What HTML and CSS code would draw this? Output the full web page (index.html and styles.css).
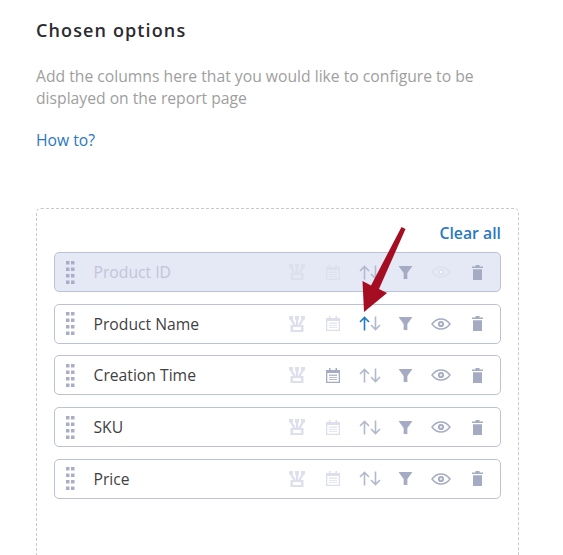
FILE: index.html
```html
<!DOCTYPE html>
<html lang="en">
<head>
<meta charset="utf-8">
<title>Chosen options</title>
<link rel="stylesheet" href="styles.css">
</head>
<body>
<svg class="defs" width="0" height="0" aria-hidden="true">
  <defs>
    <symbol id="i-group" viewBox="0 0 16 16">
      <path d="M0 0h4v3.500H0zM6 0h4v3.500H6zM12 0h4v3.500h-4z"/>
      <path d="M2 3 5.500 9M14 3l-3.500 6M8 3v6" fill="none" stroke="currentColor" stroke-width="2.400"/>
      <path fill-rule="evenodd" d="M1.500 9h13v7h-13zM4 11v3h8v-3z"/>
    </symbol>
    <symbol id="i-cal" viewBox="0 0 14 15">
      <path fill-rule="evenodd" d="M0 2h3V0h1.500v2h5V0H11v2h3v13H0zM1.300 5v8.700h11.400V5z"/>
      <path d="M3 6.500h8V8H3zM3 9h8v.900H3zM3 11h8v.900H3z" opacity=".8"/>
    </symbol>
    <symbol id="i-up" viewBox="0 0 11 15">
      <path d="M5.500 14.500V1.500M1 6l4.500-4.500L10 6" fill="none" stroke="currentColor" stroke-width="1.600"/>
    </symbol>
    <symbol id="i-down" viewBox="0 0 11 15">
      <path d="M5.500 .5v13M1 9l4.500 4.500L10 9" fill="none" stroke="currentColor" stroke-width="1.600"/>
    </symbol>
    <symbol id="i-filter" viewBox="0 0 15 14">
      <path d="M0 0h15L9.500 7.500V14H5.500V7.500z"/>
    </symbol>
    <symbol id="i-eye" viewBox="0 0 20 12">
      <path d="M1 6c2.500-3.300 5.500-5 9-5s6.500 1.700 9 5c-2.500 3.300-5.500 5-9 5S3.500 9.300 1 6z" fill="none" stroke="currentColor" stroke-width="1.400"/>
      <circle cx="10" cy="6" r="3.100"/>
      <circle cx="10" cy="6" r="1.300" fill="#fff" fill-opacity=".75"/>
    </symbol>
    <symbol id="i-trash" viewBox="0 0 11 15">
      <path d="M3.500 0h4v1.500H11V3H0V1.500h3.500zM1 4.200h9V15H1z"/>
    </symbol>
    <symbol id="i-grip" viewBox="0 0 9 23">
      <path d="M0 0h3.500v3.500H0zM5 0h3.500v3.500H5zM0 6.500h3.500V10H0zM5 6.500h3.500V10H5zM0 13h3.500v3.500H0zM5 13h3.500v3.500H5zM0 19.500h3.500V23H0zM5 19.500h3.500V23H5z"/>
    </symbol>
  </defs>
</svg>

<main class="page">
  <h1 class="title">Chosen options</h1>
  <p class="lead">Add the columns here that you would like to configure to be displayed on the report page</p>
  <a class="how" href="#">How to?</a>

  <section class="zone">
    <div class="zone-head"><a class="clear" href="#">Clear all</a></div>
    <ul class="rows">
      <li class="row row-fixed">
        <svg class="grip"><use href="#i-grip"/></svg>
        <span class="name">Product ID</span>
        <span class="tools">
          <span class="tool faint"><svg class="ic-group"><use href="#i-group"/></svg></span>
          <span class="tool faint"><svg class="ic-cal"><use href="#i-cal"/></svg></span>
          <span class="tool"><span class="sort"><svg class="ic-arrow"><use href="#i-up"/></svg><svg class="ic-arrow"><use href="#i-down"/></svg></span></span>
          <span class="tool"><svg class="ic-filter"><use href="#i-filter"/></svg></span>
          <span class="tool faint"><svg class="ic-eye"><use href="#i-eye"/></svg></span>
          <span class="tool"><svg class="ic-trash"><use href="#i-trash"/></svg></span>
        </span>
      </li>
      <li class="row">
        <svg class="grip"><use href="#i-grip"/></svg>
        <span class="name">Product Name</span>
        <span class="tools">
          <span class="tool faint"><svg class="ic-group"><use href="#i-group"/></svg></span>
          <span class="tool faint"><svg class="ic-cal"><use href="#i-cal"/></svg></span>
          <span class="tool"><span class="sort"><svg class="ic-arrow active"><use href="#i-up"/></svg><svg class="ic-arrow"><use href="#i-down"/></svg></span></span>
          <span class="tool"><svg class="ic-filter"><use href="#i-filter"/></svg></span>
          <span class="tool"><svg class="ic-eye"><use href="#i-eye"/></svg></span>
          <span class="tool"><svg class="ic-trash"><use href="#i-trash"/></svg></span>
        </span>
      </li>
      <li class="row">
        <svg class="grip"><use href="#i-grip"/></svg>
        <span class="name">Creation Time</span>
        <span class="tools">
          <span class="tool faint"><svg class="ic-group"><use href="#i-group"/></svg></span>
          <span class="tool"><svg class="ic-cal"><use href="#i-cal"/></svg></span>
          <span class="tool"><span class="sort"><svg class="ic-arrow"><use href="#i-up"/></svg><svg class="ic-arrow"><use href="#i-down"/></svg></span></span>
          <span class="tool"><svg class="ic-filter"><use href="#i-filter"/></svg></span>
          <span class="tool"><svg class="ic-eye"><use href="#i-eye"/></svg></span>
          <span class="tool"><svg class="ic-trash"><use href="#i-trash"/></svg></span>
        </span>
      </li>
      <li class="row">
        <svg class="grip"><use href="#i-grip"/></svg>
        <span class="name">SKU</span>
        <span class="tools">
          <span class="tool faint"><svg class="ic-group"><use href="#i-group"/></svg></span>
          <span class="tool faint"><svg class="ic-cal"><use href="#i-cal"/></svg></span>
          <span class="tool"><span class="sort"><svg class="ic-arrow"><use href="#i-up"/></svg><svg class="ic-arrow"><use href="#i-down"/></svg></span></span>
          <span class="tool"><svg class="ic-filter"><use href="#i-filter"/></svg></span>
          <span class="tool"><svg class="ic-eye"><use href="#i-eye"/></svg></span>
          <span class="tool"><svg class="ic-trash"><use href="#i-trash"/></svg></span>
        </span>
      </li>
      <li class="row">
        <svg class="grip"><use href="#i-grip"/></svg>
        <span class="name">Price</span>
        <span class="tools">
          <span class="tool faint"><svg class="ic-group"><use href="#i-group"/></svg></span>
          <span class="tool faint"><svg class="ic-cal"><use href="#i-cal"/></svg></span>
          <span class="tool"><span class="sort"><svg class="ic-arrow"><use href="#i-up"/></svg><svg class="ic-arrow"><use href="#i-down"/></svg></span></span>
          <span class="tool"><svg class="ic-filter"><use href="#i-filter"/></svg></span>
          <span class="tool"><svg class="ic-eye"><use href="#i-eye"/></svg></span>
          <span class="tool"><svg class="ic-trash"><use href="#i-trash"/></svg></span>
        </span>
      </li>
    </ul>
    <svg class="callout" viewBox="0 0 46 90" aria-hidden="true">
      <path d="M40.500 1 44.500 3 18 63 26 67 3 86 1.500 55 10 59.500z"/>
    </svg>
  </section>
</main>
</body>
</html>
```

FILE: styles.css
```css
html, body {
  margin: 0;
  padding: 0;
  height: 100%;
  background: #fff;
  overflow: hidden;
}

body {
  font-family: "Open Sans", "Liberation Sans", sans-serif;
}

.defs {
  position: absolute;
}

.page {
  height: 100%;
  box-sizing: border-box;
  overflow: hidden;
  padding: 18px 44px 0 36px;
}

.title {
  margin: 0;
  font-size: 18px;
  line-height: 25px;
  font-weight: 600;
  letter-spacing: 1.120px;
  color: #2b2b30;
}

.lead {
  margin: 22px 0 0;
  font-size: 15.700px;
  line-height: 22px;
  color: #9e9e9e;
}

.how {
  display: block;
  margin-top: 20px;
  font-size: 15.700px;
  line-height: 22px;
  color: #2a78c2;
  text-decoration: none;
}

.zone {
  position: relative;
  margin-top: 57px;
  height: 400px;
  padding: 0 17px;
  border: 1px dashed #c6c9ce;
  border-radius: 5px;
}

.zone-head {
  display: flex;
  justify-content: flex-end;
  height: 43px;
  padding-top: 13px;
  box-sizing: border-box;
}

.clear {
  font-size: 15.800px;
  line-height: 22px;
  font-weight: 600;
  color: #2a78c2;
  text-decoration: none;
}

.rows {
  list-style: none;
  margin: 0;
  padding: 0;
  display: flex;
  flex-direction: column;
  gap: 11.700px;
}

.row {
  display: flex;
  align-items: center;
  height: 40px;
  box-sizing: border-box;
  padding: 0 5px 0 11px;
  border: 1px solid #bcc1d3;
  border-radius: 5px;
  background: #fff;
  color: #3f3f43;
}

.row-fixed {
  background: #e5e8f5;
}

.row-fixed .name {
  color: #c2c5d8;
}

.grip {
  width: 9px;
  height: 23px;
  flex: none;
  fill: #a9aec6;
  color: #a9aec6;
}

.name {
  margin-left: 18.500px;
  font-size: 15.700px;
  line-height: 22px;
}

.tools {
  display: flex;
  align-items: center;
  margin-left: auto;
  color: #a5abc2;
}

.tool {
  display: flex;
  align-items: center;
  justify-content: center;
  width: 36px;
  height: 20px;
}

.tool svg {
  display: block;
  fill: currentColor;
  filter: blur(0.3px);
}

.faint {
  color: #dde0ec;
}

.ic-group {
  width: 16px;
  height: 16px;
}

.ic-cal {
  width: 14px;
  height: 15px;
}

.sort {
  display: flex;
  margin-left: 2px;
  color: #b3b8cd;
}

.ic-arrow {
  width: 11px;
  height: 15px;
}

.sort .active {
  color: #1f7cc4;
}

.ic-filter {
  width: 15px;
  height: 13px;
}

.ic-eye {
  width: 20px;
  height: 12px;
}

.ic-trash {
  width: 11px;
  height: 15px;
}

.callout {
  position: absolute;
  left: 324px;
  top: 17px;
  width: 46px;
  height: 90px;
  fill: #a50d22;
}
```
